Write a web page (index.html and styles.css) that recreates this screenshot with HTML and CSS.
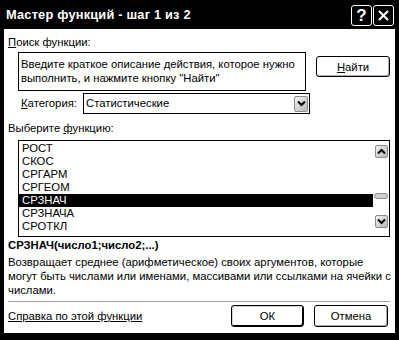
FILE: index.html
```html
<!DOCTYPE html>
<html lang="ru">
<head>
    <meta charset="UTF-8">
    <title>Мастер функций - шаг 1 из 2</title>
    <link rel="stylesheet" href="styles.css">
</head>
<body>
    <div class="window">
        <!-- Title bar -->
        <div class="titlebar">
            <span class="title">Мастер функций - шаг 1 из 2</span>
            <div class="title-buttons">
                <span class="tbtn help">?</span>
                <span class="tbtn">
                    <svg width="13" height="13" viewBox="0 0 13 13"><path d="M2 2 L11 11 M11 2 L2 11" stroke="#fff" stroke-width="2"/></svg>
                </span>
            </div>
        </div>

        <!-- Dialog body -->
        <div class="client">
            <div class="label"><u>П</u>оиск функции:</div>
            <div class="search-row">
                <div class="search-box">Введите краткое описание действия, которое нужно выполнить, и нажмите кнопку "Найти"</div>
                <button class="btn find"><u>Н</u>айти</button>
            </div>

            <div class="category-row">
                <span class="category-label"><u>К</u>атегория:</span>
                <div class="combo">
                    <span class="combo-value">Статистические</span>
                    <span class="combo-btn">
                        <svg width="9" height="7" viewBox="0 0 9 7"><path d="M1 1.5 L4.5 5 L8 1.5" stroke="#000" stroke-width="2" fill="none"/></svg>
                    </span>
                </div>
            </div>

            <div class="label list-label">Выберите <u>ф</u>ункцию:</div>
            <div class="listbox">
                <ul class="items">
                    <li>РОСТ</li>
                    <li>СКОС</li>
                    <li>СРГАРМ</li>
                    <li>СРГЕОМ</li>
                    <li class="selected">СРЗНАЧ</li>
                    <li>СРЗНАЧА</li>
                    <li>СРОТКЛ</li>
                </ul>
                <div class="scrollbar">
                    <span class="sbtn">
                        <svg width="9" height="7" viewBox="0 0 9 7"><path d="M1 5.5 L4.5 2 L8 5.5" stroke="#000" stroke-width="2" fill="none"/></svg>
                    </span>
                    <span class="thumb"></span>
                    <span class="sbtn">
                        <svg width="9" height="7" viewBox="0 0 9 7"><path d="M1 1.5 L4.5 5 L8 1.5" stroke="#000" stroke-width="2" fill="none"/></svg>
                    </span>
                </div>
            </div>

            <div class="signature">СРЗНАЧ(число1;число2;...)</div>
            <p class="desc">Возвращает среднее (арифметическое) своих аргументов, которые могут быть числами или именами, массивами или ссылками на ячейки с числами.</p>

            <div class="separator"></div>

            <div class="footer">
                <a class="help-link" href="#">Справка по этой функции</a>
                <button class="btn default">ОК</button>
                <button class="btn cancel">Отмена</button>
            </div>
        </div>
    </div>
</body>
</html>
```

FILE: styles.css
```css
/* Page */
body {
    margin: 0;
    background: #000;
    font-family: 'Liberation Sans', Tahoma, sans-serif;
    font-size: 11.3px;
    line-height: 13px;
    color: #000;
}

.window {
    width: 399px;
    height: 340px;
    display: flex;
    flex-direction: column;
    background: #000;
}

/* Title bar */
.titlebar {
    height: 29px;
    display: flex;
    align-items: center;
    justify-content: space-between;
    padding: 0 5px 0 6px;
    color: #fff;
}

.title {
    font-size: 12.8px;
    font-weight: bold;
    letter-spacing: 0.2px;
}

.title-buttons {
    display: flex;
    margin-top: 1px;
}

.tbtn {
    width: 21px;
    height: 21px;
    box-sizing: border-box;
    border: 1px solid #fff;
    border-radius: 3px;
    display: flex;
    align-items: center;
    justify-content: center;
    font-size: 17px;
    font-weight: bold;
    margin-left: 1px;
}

/* Client area */
.client {
    margin: 0 4px;
    height: 304px;
    box-sizing: border-box;
    background: #fff;
    padding: 7px 5px 0 4px;
}

.label {
    height: 13px;
}

/* Search */
.search-row {
    display: flex;
    align-items: flex-start;
    margin-top: 3px;
}

.search-box {
    margin-left: 10px;
    width: 288px;
    height: 39px;
    box-sizing: border-box;
    border: 1px solid #000;
    padding: 4px 2px;
    line-height: 14px;
}

.btn {
    font-family: inherit;
    font-size: 11.3px;
    color: #000;
    background: #fff;
    border: 1px solid #000;
    border-radius: 3px;
    box-shadow: inset -1px -1px 0 #b0b0b0;
    padding: 0;
    height: 22px;
}

.find {
    margin-left: 10px;
    margin-top: 4px;
    width: 74px;
    height: 21px;
}

/* Category */
.category-row {
    display: flex;
    align-items: center;
    margin-top: 2px;
    padding-left: 13px;
}

.category-label {
    width: 62px;
}

.combo {
    width: 227px;
    height: 21px;
    box-sizing: border-box;
    border: 1px solid #000;
    display: flex;
    align-items: center;
    justify-content: space-between;
    padding: 0 1px 0 2px;
}

.combo-btn,
.sbtn {
    width: 14px;
    height: 16px;
    box-sizing: border-box;
    border: 1px solid #8a8a8a;
    border-radius: 2px;
    background: linear-gradient(135deg, #f2f2f2, #b8b8b8);
    display: flex;
    align-items: center;
    justify-content: center;
}

/* Function list */
.list-label {
    margin-top: 8px;
}

.listbox {
    margin: 5px 0 0 10px;
    width: 372px;
    height: 97px;
    box-sizing: border-box;
    border: 1px solid #000;
    display: flex;
}

.items {
    list-style: none;
    margin: 0;
    padding: 1px 0 0;
    flex: 1;
}

.items li {
    height: 13px;
    padding-left: 3px;
}

.items .selected {
    background: #000;
    color: #fff;
}

.scrollbar {
    width: 16px;
    display: flex;
    flex-direction: column;
    align-items: center;
    padding: 4px 0;
}

.sbtn {
    width: 13px;
    height: 13px;
}

.thumb {
    width: 14px;
    height: 6px;
    margin: 35px 0 16px;
    border: 1px solid #8a8a8a;
    border-radius: 3px;
    background: #d0d0d0;
    box-sizing: border-box;
}

/* Description */
.signature {
    margin-top: 2px;
    font-weight: bold;
}

.desc {
    margin: 3px -5px 0 0;
    line-height: 14px;
}

.separator {
    margin-top: 4px;
    height: 1px;
    background: #a0a0a0;
}

/* Footer */
.footer {
    display: flex;
    align-items: center;
    margin-top: 3px;
}

.help-link {
    flex: 1;
    color: #000;
    text-decoration: underline;
}

.default {
    width: 73px;
    margin-right: 10px;
    box-shadow: inset -1px -1px 0 #000, inset 1px 1px 0 #d0d0d0;
}

.cancel {
    width: 74px;
    margin-right: 2px;
}
```
